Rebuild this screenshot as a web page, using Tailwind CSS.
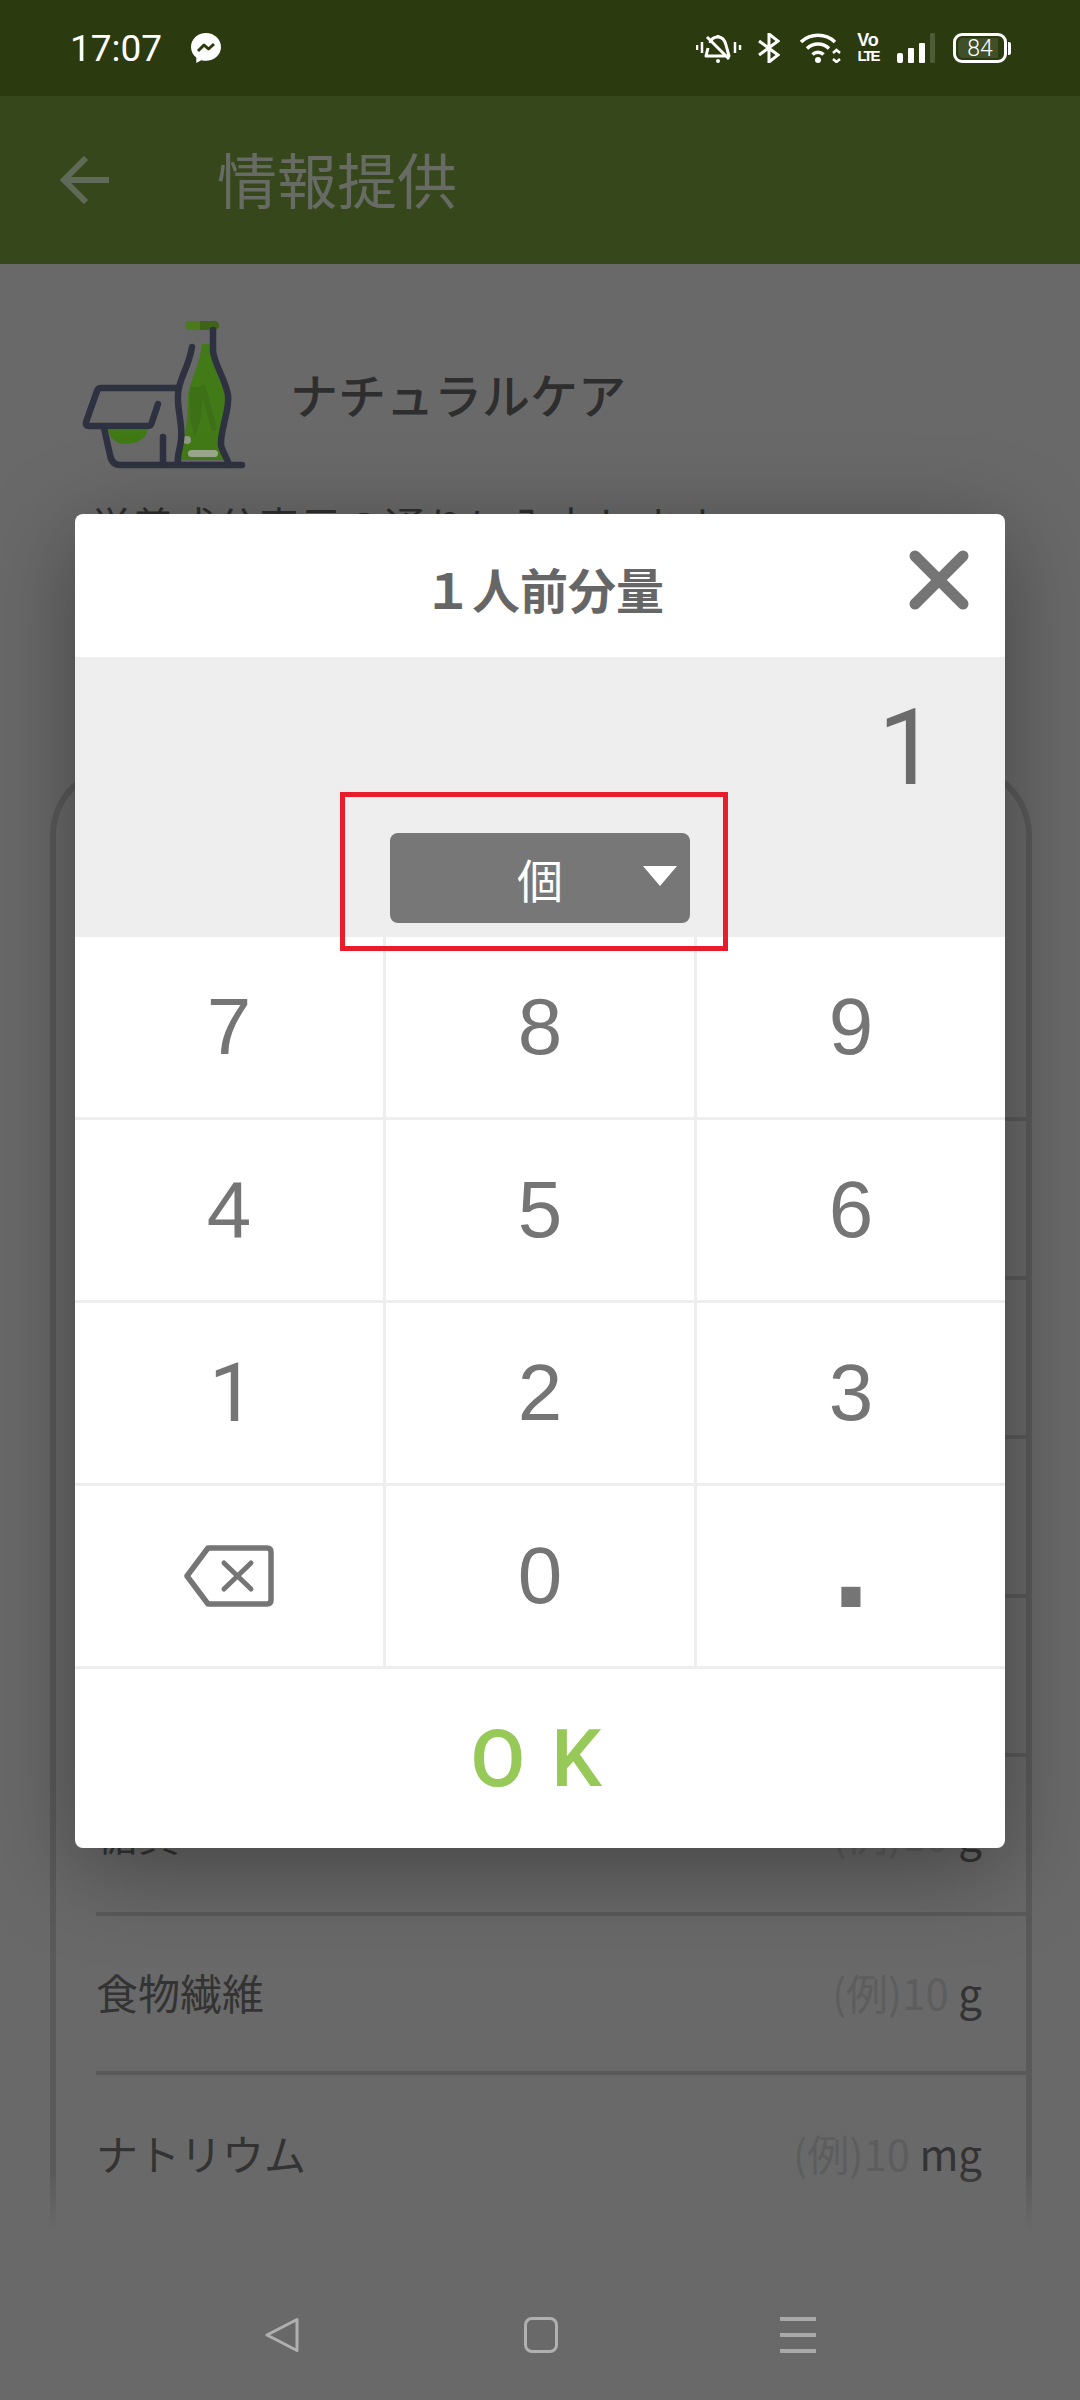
<!DOCTYPE html>
<html lang="ja">
  <head>
    <meta charset="UTF-8">
    <title>情報提供</title>
    <script src="https://cdn.jsdelivr.net/npm/@tailwindcss/browser@4"></script>
  </head>

  <body class="relative w-[1080px] h-[2400px] overflow-hidden bg-[#696969] font-['Roboto','Noto_Sans_CJK_JP',sans-serif]">
    <!-- status bar -->
    <div class="flex items-center h-24 pl-[70px] pr-[69px] bg-[#2b3a0f] text-white">
      <span class="text-[37px] leading-none">17:07</span>
      <svg class="ml-[29px]" width="30" height="30" viewBox="0 0 30 30">
        <path fill="#fff" d="M15 0C6.700 0 0 6.200 0 14c0 4.300 2 8 5.300 10.600V30l5-2.800c1.500.4 3.100.6 4.700.6 8.300 0 15-6.100 15-13.800S23.300 0 15 0z"/>
        <path fill="none" stroke="#2b3a0f" stroke-width="3" stroke-linejoin="round" d="M7 18l6-6 4.500 4L23 11"/>
      </svg>
      <div class="flex items-center ml-auto">
        <svg width="46" height="30" viewBox="0 0 46 30" fill="none" stroke="#fff">
          <path stroke-width="2.500" d="M1 12v5M6 9v11M39 9v11M44 12v5"/>
          <path stroke-width="3" stroke-linejoin="round" d="M22 2v3M14 10c1-4 4-6 8-6 5 0 7 4 8 8l3 11H10l2-8M11 4l22 22"/>
          <circle cx="22" cy="28" r="2" fill="#fff" stroke="none"/>
        </svg>
        <svg class="ml-[16px]" width="22" height="30" viewBox="0 0 22 30" fill="none" stroke="#fff" stroke-width="3">
          <path d="M1 8l19 14-9 7V1l9 7L1 22"/>
        </svg>
        <svg class="ml-[20px]" width="44" height="30" viewBox="0 0 44 30" fill="none" stroke="#fff">
          <path stroke-width="3.500" d="M1 9a25 25 0 0 1 34 0M7 15.500a16 16 0 0 1 22 0M12.500 21.500a8 8 0 0 1 11 0"/>
          <circle cx="18" cy="27" r="3" fill="#fff" stroke="none"/>
          <path stroke-width="2.500" d="M33 20l3.500-3 3.500 3M33 26l3.500 3 3.500-3"/>
        </svg>
        <div class="flex flex-col items-center ml-[12px] w-[24px] font-['Liberation_Sans'] font-bold">
          <span class="text-[18px] leading-[14px]">Vo</span>
          <span class="text-[15px] leading-[14px] mt-[2px] tracking-[-2px]">LTE</span>
        </div>
        <div class="flex items-end gap-[5px] ml-[17px] h-[30px]">
          <span class="w-[6px] h-[10px] rounded-[2px] bg-white"></span>
          <span class="w-[6px] h-[15px] rounded-[1px] bg-white"></span>
          <span class="w-[6px] h-[20px] rounded-[1px] bg-white"></span>
          <span class="w-[5px] h-[30px] rounded-[1px] bg-[#4e5c38]"></span>
        </div>
        <div class="flex items-center ml-[18px]">
          <div class="relative flex items-center justify-center w-[54px] h-[30px] rounded-[9px] border-[3px] border-white">
            <span class="absolute left-[2px] top-[2px] bottom-[2px] w-[40px] rounded-l-[5px] bg-[#3f4f28]"></span>
            <span class="relative text-[23px] leading-none font-light">84</span>
          </div>
          <span class="ml-[1px] w-[3px] h-[13px] rounded-r-[2px] bg-white"></span>
        </div>
      </div>
    </div>

    <!-- app bar -->
    <header class="flex items-center h-[168px] pl-[60px] bg-[#36481b]">
      <svg width="49" height="48" viewBox="0 0 49 48" fill="none" stroke="#5f6a58" stroke-width="6">
        <path d="M26 2L4 24l22 22M4 24h45"/>
      </svg>
      <h1 class="ml-[108px] mb-[4px] text-[60px] leading-none text-[#686a64] font-['Noto_Sans_CJK_JP']">情報提供</h1>
    </header>

    <main class="font-['Noto_Sans_CJK_JP',sans-serif]">
      <div class="flex items-center pl-[80px] pt-[51px]">
        <svg width="170" height="155" viewBox="20 15 170 155" fill="none">
          <rect x="125" y="21" width="34" height="9" rx="4.500" fill="#4a7a1b"/>
          <path fill="#3f6318" d="M140 21h14.500a4.500 4.500 0 0 1 0 9H140z"/>
          <path fill="#427a18" d="M142 44h10v14c2 14 13 27 13 39 0 18-7 33-5 46l7 17h-47l3-20c5-15 5-35 5-45 2-15 12-30 14-51z"/>
          <path fill="#3e7018" d="M130 87h13l-2 30-6 20-5-20z"/>
          <path stroke="#3e7018" stroke-width="6" stroke-linecap="round" d="M143 88l11 40"/>
          <circle cx="127" cy="140" r="4" fill="#8f9a84"/>
          <rect x="128" y="150" width="30" height="7" rx="3.500" fill="#9ba78d"/>
          <path fill="#3f7a14" d="M48 130h40c-3 10-13 14-22 14s-15-4-18-14z"/>
          <g stroke="#2e3140" stroke-width="6.500" stroke-linecap="round" stroke-linejoin="round">
            <path d="M153 30v20c0 12 12 28 15 45 2 15-8 35-7 50 1 6 7 15 8 20"/>
            <path d="M132 47c-4 23-14 33-14 48-1 15 5 30 3 45-1 10-4 15-3 22"/>
            <path d="M117 88H41q-3 0-4 3l-11 31q-1 4 3 4h59q3 0 4-4l6-18"/>
            <path d="M44 128l6 27q2 10 10 10h122"/>
            <path d="M103 137v25"/>
          </g>
        </svg>
        <h2 class="ml-[40px] text-[48px] leading-none font-medium text-[#2e2e2e]">ナチュラルケア</h2>
      </div>
      <p class="ml-[90px] mt-[34px] text-[42px] leading-none text-[#2e2e2e]">栄養成分表示の通りに入力します</p>

      <!-- nutrition card behind the dialog -->
      <section class="relative ml-[50px] mt-[219px] w-[982px] h-[1466px] pt-[191px] pl-[40px] rounded-t-[70px] border-x-[6px] border-t-[6px] border-[#5a5a5a] text-[42px] text-[#333]">
        <div class="h-[159px] border-b-[4px] border-[#5a5a5a]"></div>
        <div class="h-[159px] border-b-[4px] border-[#5a5a5a]"></div>
        <div class="h-[159px] border-b-[4px] border-[#5a5a5a]"></div>
        <div class="h-[159px] border-b-[4px] border-[#5a5a5a]"></div>
        <div class="h-[159px] border-b-[4px] border-[#5a5a5a]"></div>
        <div class="flex items-center justify-between h-[159px] pr-[44px] pb-[5px] border-b-[4px] border-[#5a5a5a]">
          <span>糖質</span><span><span class="text-[#5d5d5d]">(例)10</span> g</span>
        </div>
        <div class="flex items-center justify-between h-[159px] pr-[44px] pb-[5px] border-b-[4px] border-[#5a5a5a]">
          <span>食物繊維</span><span><span class="text-[#5d5d5d]">(例)10</span> g</span>
        </div>
        <div class="flex items-center justify-between h-[159px] pr-[44px] pb-[5px]">
          <span>ナトリウム</span><span><span class="text-[#5d5d5d]">(例)10</span> mg</span>
        </div>
        <div class="absolute left-[-6px] right-[-6px] bottom-0 h-[60px] bg-gradient-to-b from-[#69696900] to-[#696969]"></div>
      </section>
    </main>

    <!-- nav bar -->
    <nav class="absolute left-0 right-0 top-[2317px] flex justify-center">
      <svg width="36" height="36" viewBox="0 0 36 36" fill="none" stroke="#b0b0b0" stroke-width="3" stroke-linejoin="round">
        <path d="M32 2.500v31L2 18z"/>
      </svg>
      <span class="ml-[223px] w-[34px] h-[36px] rounded-[8px] border-[3px] border-[#b0b0b0]"></span>
      <div class="ml-[222px] flex flex-col justify-between w-[36px] h-[36px]">
        <span class="h-[4px] bg-[#a9a9a9]"></span>
        <span class="h-[4px] bg-[#a9a9a9]"></span>
        <span class="h-[4px] bg-[#a9a9a9]"></span>
      </div>
    </nav>

    <!-- unit dialog -->
    <div class="absolute left-[75px] top-[514px] w-[930px] h-[1334px] flex flex-col rounded-[8px] overflow-hidden bg-white shadow-[0_20px_90px_rgba(0,0,0,0.35)]">
      <div class="relative flex items-center justify-center h-[143px] pl-[8px] pt-[4px] font-['Noto_Sans_CJK_JP'] font-bold text-[48px] text-[#666]">
        １人前分量
        <svg class="absolute left-[834px] top-[36px]" width="60" height="60" viewBox="0 0 60 60" stroke="#757575" stroke-width="11" stroke-linecap="round">
          <path d="M6 6l48 48M54 6L6 54"/>
        </svg>
      </div>
      <div class="flex flex-col h-[280px] bg-[#eee]">
        <div class="text-right pr-[68px] pt-[37px] text-[105px] leading-[110px] text-[#6b6b6b]">1</div>
        <button class="relative flex items-center justify-center self-center mt-[29px] w-[300px] h-[90px] rounded-[8px] bg-[#777] text-white text-[46px] font-['Noto_Sans_CJK_JP']">
          個
          <svg class="absolute left-[253px] top-[33px]" width="34" height="20" viewBox="0 0 34 20"><path d="M0 0h34L17 20z" fill="#fff"/></svg>
        </button>
      </div>
      <div class="grid grid-cols-3 gap-[3px] bg-[#eee] pb-[3px] font-['Liberation_Sans'] text-[80px] text-[#757575]">
        <button class="flex items-center justify-center h-[180px] bg-white">7</button>
        <button class="flex items-center justify-center h-[180px] bg-white">8</button>
        <button class="flex items-center justify-center h-[180px] bg-white">9</button>
        <button class="flex items-center justify-center h-[180px] bg-white">4</button>
        <button class="flex items-center justify-center h-[180px] bg-white">5</button>
        <button class="flex items-center justify-center h-[180px] bg-white">6</button>
        <button class="flex items-center justify-center h-[180px] pl-[6px] bg-white font-['Roboto'] text-[82px]">1</button>
        <button class="flex items-center justify-center h-[180px] bg-white">2</button>
        <button class="flex items-center justify-center h-[180px] bg-white">3</button>
        <button class="flex items-center justify-center h-[180px] bg-white">
          <svg width="90" height="62" viewBox="0 0 90 62" fill="none" stroke="#757575" stroke-linecap="round" stroke-linejoin="round">
            <path stroke-width="5.500" d="M24 3h59q4 0 4 4v48q0 4-4 4H24L3 31z"/>
            <path stroke-width="5" d="M40 18l27 26M67 18L40 44"/>
          </svg>
        </button>
        <button class="flex items-center justify-center h-[180px] bg-white">0</button>
        <button class="flex items-center justify-center h-[180px] pb-[32px] bg-white text-[135px] leading-none font-bold">.</button>
      </div>
      <button class="flex-1 flex items-center justify-center font-medium text-[80px] tracking-[26px] pl-[18px] text-[#96c957]">OK</button>

      <!-- red annotation box -->
      <div class="absolute left-[265px] top-[278px] w-[388px] h-[159px] border-[5px] border-[#e81c2a]"></div>
    </div>
  </body>
</html>
